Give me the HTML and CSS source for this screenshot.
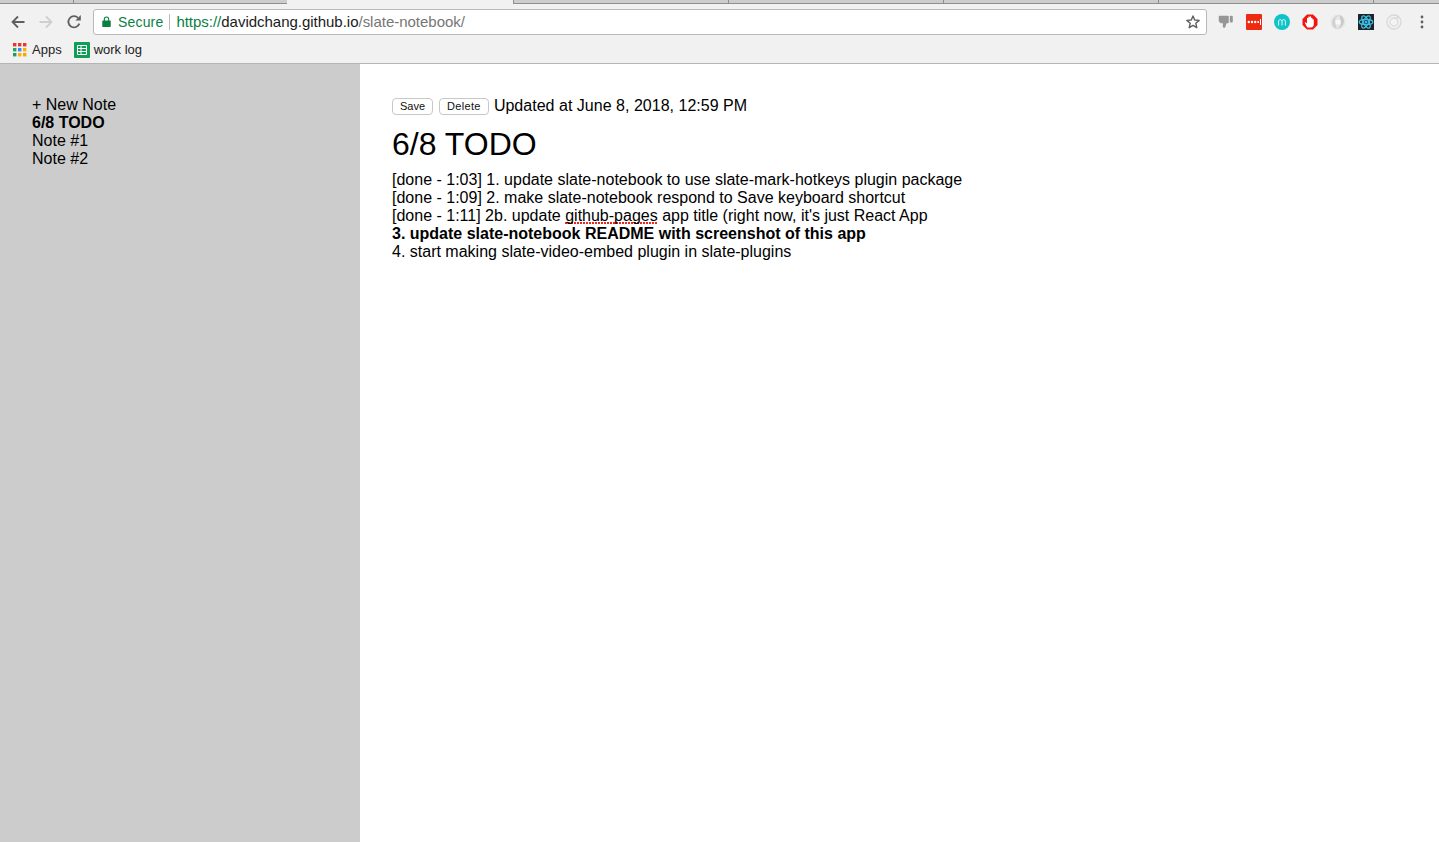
FILE: index.html
```html
<!DOCTYPE html>
<html lang="en">
<head>
<meta charset="utf-8">
<title>slate-notebook</title>
<link rel="stylesheet" href="styles.css">
</head>
<body>
<header class="chrome">
  <div class="tabstrip">
    <div class="tab tab-first"></div>
    <div class="tab tab-second"></div>
    <div class="tab-active"></div>
    <div class="tab"></div>
    <div class="tab"></div>
    <div class="tab"></div>
    <div class="tab"></div>
    <div class="tab tab-last"></div>
  </div>
  <div class="toolbar">
    <div class="nav">
      <svg class="nav-icon" viewBox="0 0 16 16"><path d="M14.500 8H3M8 2.500 2.500 8 8 13.500" fill="none" stroke="#5f5f5f" stroke-width="1.800"/></svg>
      <svg class="nav-icon" viewBox="0 0 16 16"><path d="M1.500 8H13M8 2.500 13.500 8 8 13.500" fill="none" stroke="#cfcfcf" stroke-width="1.800"/></svg>
      <svg class="nav-icon" viewBox="0 0 16 16"><path d="M13.300 9.600A5.600 5.600 0 1 1 12 3.900" fill="none" stroke="#5f5f5f" stroke-width="1.800"/><path d="M9.400 6.400h5.400V1z" fill="#5f5f5f"/></svg>
    </div>
    <div class="omnibox">
      <svg class="lock" viewBox="0 0 10 12"><path d="M0.800 5h8.400a.5.5 0 0 1 .5.5v6a.5.5 0 0 1-.5.5H.8a.5.5 0 0 1-.5-.5v-6A.5.5 0 0 1 .8 5zM2 5V3.400a3 3 0 0 1 6 0V5H6.800V3.400a1.800 1.800 0 0 0-3.600 0V5z" fill="#0b8043"/></svg>
      <span class="secure">Secure</span>
      <span class="omni-sep"></span>
      <span class="url"><span class="scheme">https://</span><span class="host">davidchang.github.io</span><span class="path">/slate-notebook/</span></span>
      <svg class="star" viewBox="0 0 16 16"><path d="M8 1.900 9.700 6l4.500.4-3.400 2.900 1 4.400L8 11.400l-3.800 2.300 1-4.400-3.400-2.900L6.300 6z" fill="none" stroke="#5f5f5f" stroke-width="1.400" stroke-linejoin="round"/></svg>
    </div>
    <div class="extensions">
      <svg class="ext" viewBox="0 0 16 16"><path d="M1.500 2.500h8.500v6H8L6.500 13 5.500 12.800l.3-4.300H3L1.500 7z" fill="#969696" stroke="#969696" stroke-width="1.500" stroke-linejoin="round"/><rect x="11.800" y="1.800" width="3" height="6.800" rx="1" fill="#969696"/></svg>
      <svg class="ext" viewBox="0 0 16 16"><rect width="16" height="16" rx="1" fill="#ee2a12"/><circle cx="2.800" cy="8" r="1.200" fill="#fff"/><circle cx="6" cy="8" r="1.200" fill="#fff"/><circle cx="9.200" cy="8" r="1.200" fill="#fff"/><circle cx="12.200" cy="8" r="1" fill="#fff"/><rect x="14" y="5" width="1" height="6" fill="#fff"/></svg>
      <svg class="ext" viewBox="0 0 16 16"><circle cx="8" cy="8" r="8" fill="#0fc3c6"/><path d="M4.600 11.500V7.200c0-2 3.400-2 3.400 0v4.300M8 7.200c0-2 3.400-2 3.400 0v4.300" fill="none" stroke="#fff" stroke-width=".9"/></svg>
      <svg class="ext" viewBox="0 0 16 16"><path d="M5 .5h6L15.500 5v6L11 15.500H5L.5 11V5z" fill="#f2150f"/><path d="M5 13 2.800 8.800l1-.6L5 9.600V4.200a.7.7 0 0 1 1.300 0v-1a.7.7 0 0 1 1.400 0V3a.7.7 0 0 1 1.400 0v1.400a.7.7 0 0 1 1.400 0v1.300a.7.7 0 0 1 1.300 0V10c0 2-1 3.500-3 3.500H6.500A2 2 0 0 1 5 13z" fill="#fff"/></svg>
      <svg class="ext" viewBox="0 0 16 16"><circle cx="8" cy="8" r="7.500" fill="#e6e6e6"/><path d="M9 1c5 1.500 6.500 7 3 11-1.200 1.400-3 2.400-5 3 3-2 4.500-4.500 4-7-.3-2-.8-4.500-2-7z" fill="#c8c8c8"/><path d="M7 15C2 13.500.5 8 4 4 5.200 2.600 7 1.600 9 1 6 3 4.500 5.500 5 8c.3 2 .8 4.500 2 7z" fill="#d0d0d0"/><circle cx="8" cy="8" r="2.600" fill="#f8f8f8"/></svg>
      <svg class="ext" viewBox="0 0 16 16"><rect width="16" height="16" fill="#20232a"/><g fill="none" stroke="#38bfe3" stroke-width="1.200"><ellipse cx="8" cy="8" rx="6.800" ry="2.700"/><ellipse cx="8" cy="8" rx="6.800" ry="2.700" transform="rotate(60 8 8)"/><ellipse cx="8" cy="8" rx="6.800" ry="2.700" transform="rotate(120 8 8)"/></g><circle cx="8" cy="8" r="1.500" fill="#38bfe3"/></svg>
      <svg class="ext" viewBox="0 0 16 16"><circle cx="8" cy="8" r="7" fill="#f3f3f3" stroke="#d8d8d8" stroke-width="1.300"/><circle cx="8" cy="8" r="4" fill="none" stroke="#dadada" stroke-width="1.300"/><circle cx="11.500" cy="3.600" r="1.200" fill="#d8d8d8"/></svg>
      <svg class="kebab" viewBox="0 0 4 14"><circle cx="2" cy="2" r="1.400" fill="#5f5f5f"/><circle cx="2" cy="7" r="1.400" fill="#5f5f5f"/><circle cx="2" cy="12" r="1.400" fill="#5f5f5f"/></svg>
    </div>
  </div>
  <div class="bookmarks">
    <div class="bookmark">
      <svg class="bm-icon" viewBox="0 0 14 14">
        <rect x="0" y="0" width="3.400" height="3.400" fill="#e8382c"/><rect x="5" y="0" width="3.400" height="3.400" fill="#e8382c"/><rect x="10" y="0" width="3.400" height="3.400" fill="#e8382c"/>
        <rect x="0" y="5" width="3.400" height="3.400" fill="#22a565"/><rect x="5" y="5" width="3.400" height="3.400" fill="#3f87f1"/><rect x="10" y="5" width="3.400" height="3.400" fill="#f6b400"/>
        <rect x="0" y="10" width="3.400" height="3.400" fill="#1a9e5c"/><rect x="5" y="10" width="3.400" height="3.400" fill="#f6b400"/><rect x="10" y="10" width="3.400" height="3.400" fill="#f6a800"/>
      </svg>
      <span>Apps</span>
    </div>
    <div class="bookmark">
      <svg class="sheet-icon" viewBox="0 0 16 16"><rect width="16" height="16" rx="1" fill="#0f9d58"/><path d="M3.500 3.500h9v9h-9zM3.500 6.500h9M3.500 9.500h9M7 3.500v9" fill="none" stroke="#fff" stroke-width="1"/></svg>
      <span>work log</span>
    </div>
  </div>
</header>
<main class="app">
  <aside class="sidebar">
    <div>+ New Note</div>
    <div class="selected">6/8 TODO</div>
    <div>Note #1</div>
    <div>Note #2</div>
  </aside>
  <section class="editor">
    <div class="actions">
      <button class="btn">Save</button>
      <button class="btn btn-delete">Delete</button>
      <span class="updated">Updated at June 8, 2018, 12:59 PM</span>
    </div>
    <h1 class="title">6/8 TODO</h1>
    <div class="body">
      <p>[done - 1:03] 1. update slate-notebook to use slate-mark-hotkeys plugin package</p>
      <p>[done - 1:09] 2. make slate-notebook respond to Save keyboard shortcut</p>
      <p>[done - 1:11] 2b. update <span class="misspelled">github-pages</span> app title (right now, it's just React App</p>
      <p class="strong">3. update slate-notebook README with screenshot of this app</p>
      <p>4. start making slate-video-embed plugin in slate-plugins</p>
    </div>
  </section>
</main>
</body>
</html>
```

FILE: styles.css
```css
* { box-sizing: border-box; }
html, body { margin: 0; height: 100%; overflow: hidden; }
body {
  display: flex;
  flex-direction: column;
  font-family: "Liberation Sans", Arial, sans-serif;
  font-size: 16px;
  line-height: 18px;
  color: #000;
  background: #fff;
}
.chrome {
  flex: none;
  height: 64px;
  background: #f1f1f1;
  border-bottom: 1px solid #b4b4b4;
}
.tabstrip {
  display: flex;
  height: 4px;
  overflow: hidden;
}
.tab {
  flex: none;
  width: 215px;
  height: 4px;
  background: #cdcdcd;
  border-bottom: 1px solid #8e8e8e;
  border-left: 1px solid #8e8e8e;
}
.tab-first { width: 73px; border-left: 0; }
.tab-second { width: 214px; }
.tab-active { flex: none; width: 226px; height: 4px; background: #f1f1f1; }
.tab-last { flex: 1; width: auto; }
.toolbar {
  display: flex;
  align-items: center;
  height: 31px;
  padding: 5px 0 0 10px;
}
.nav { display: flex; gap: 12px; width: 83px; flex: none; }
.nav-icon { width: 16px; height: 16px; }
.omnibox {
  flex: none;
  display: flex;
  align-items: center;
  width: 1114px;
  height: 26px;
  background: #fff;
  border: 1px solid #b9b9b9;
  border-radius: 3px;
  font-size: 14px;
  padding: 0 5px 0 8px;
}
.lock { width: 9px; height: 11px; margin-bottom: 1px; }
.secure { margin-left: 7px; color: #0b8043; letter-spacing: .17px; }
.omni-sep { width: 1px; height: 16px; background: #b9b9b9; margin: 0 6px; }
.url { flex: 1; font-size: 15px; letter-spacing: -.02px; }
.scheme { color: #0b8043; }
.host { color: #1a1a1a; }
.path { color: #767676; }
.star { width: 16px; height: 16px; }
.extensions {
  flex: none;
  display: flex;
  align-items: center;
  gap: 12px;
  margin-left: 11px;
}
.ext { width: 16px; height: 16px; }
.kebab { width: 4px; height: 14px; margin-left: 6px; }
.bookmarks {
  display: flex;
  align-items: center;
  gap: 12px;
  height: 28px;
  padding: 1px 0 0 13px;
  font-size: 13px;
  color: #222;
}
.bookmark { display: flex; align-items: center; }
.bm-icon { width: 14px; height: 14px; margin-right: 5px; }
.sheet-icon { width: 16px; height: 16px; margin-right: 4px; }
.app { flex: 1; display: flex; min-height: 0; }
.sidebar {
  flex: none;
  width: 360px;
  background: #ccc;
  padding: 32px;
}
.selected { font-weight: 700; }
.editor { flex: 1; padding: 32px; }
.actions { display: flex; align-items: center; height: 18px; margin-top: 1px; }
.btn {
  height: 17px;
  margin: 1px 6px 0 0;
  padding: 0 7px;
  font: 11px/15px "Liberation Sans", Arial, sans-serif;
  color: #111;
  background: #fff;
  border: 1px solid #c8c8c8;
  border-radius: 4px;
}
.btn-delete { letter-spacing: .3px; margin-right: 5.2px; }
.updated { letter-spacing: .02px; }
.title {
  margin: 11px 0 8px;
  font-size: 32px;
  line-height: 37px;
  font-weight: 400;
}
.body p { margin: 0; white-space: nowrap; }
.strong { font-weight: 700; }
.misspelled {
  background-image: radial-gradient(circle at 1px 1px, #e8261f 1px, transparent 1px);
  background-size: 3px 2px;
  background-repeat: repeat-x;
  background-position: 0 100%;
}
```
